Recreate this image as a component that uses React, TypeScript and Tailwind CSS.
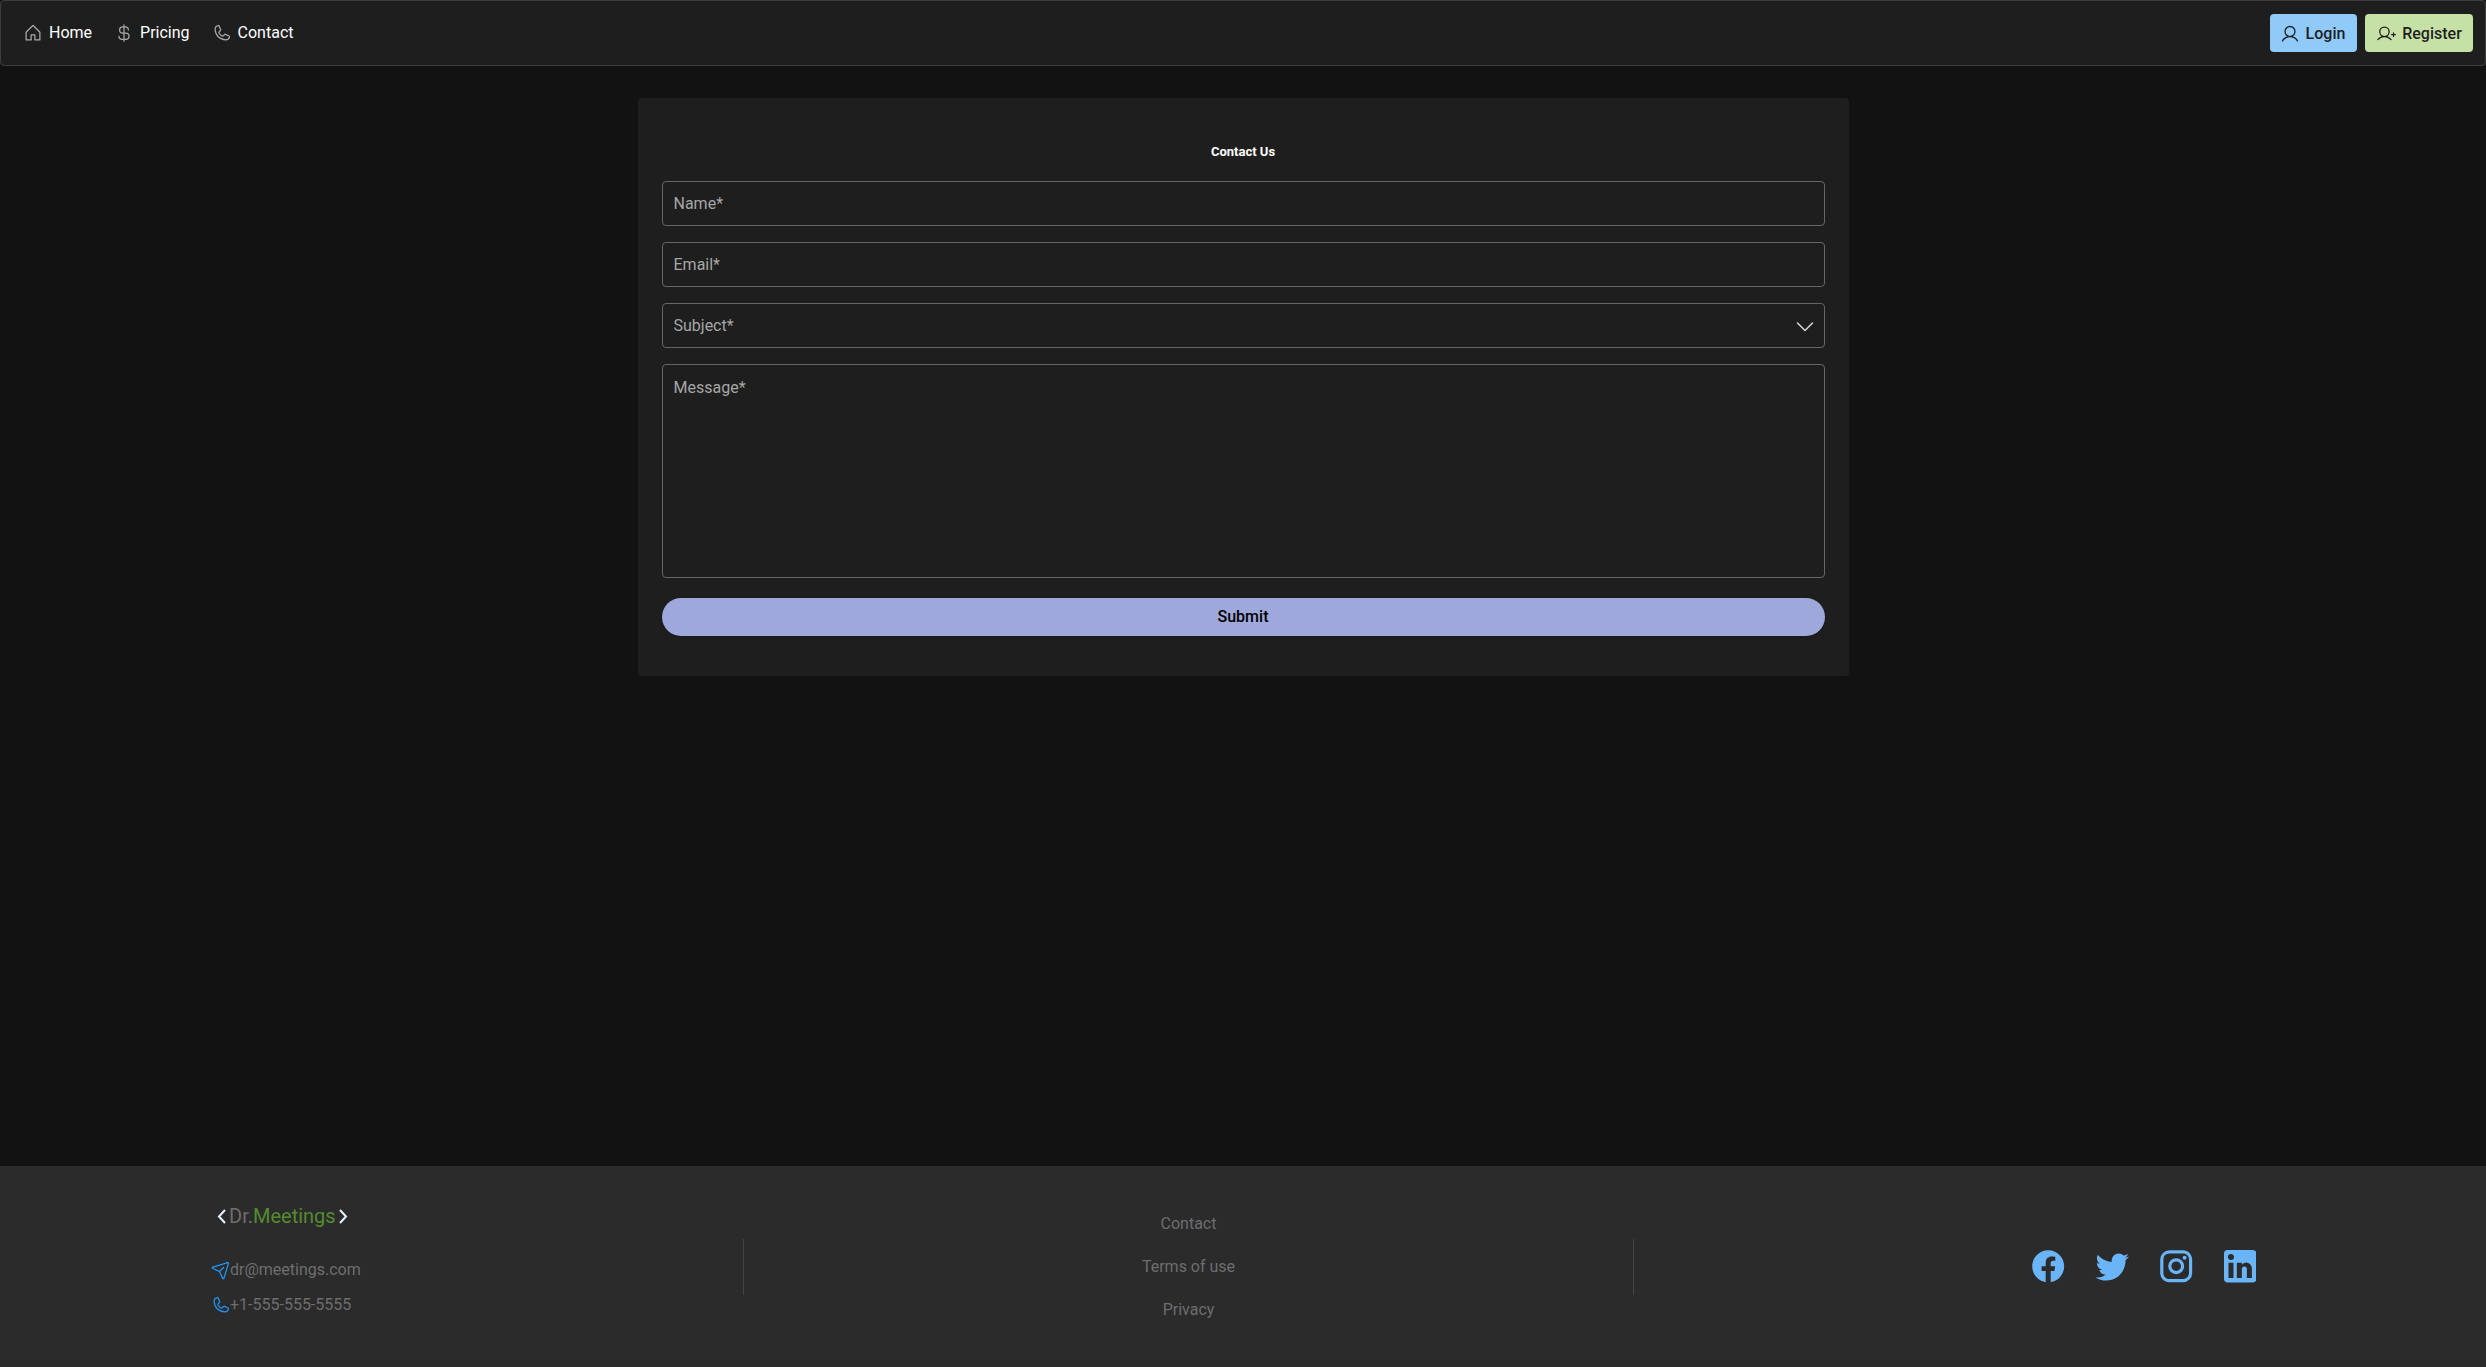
import React from 'react';
import {
  PiCaretDown,
  PiCurrencyDollar,
  PiHouse,
  PiPaperPlaneTilt,
  PiPhone,
  PiUser,
  PiUserPlus,
} from 'react-icons/pi';

const socialIcons = [
  {
    viewBox: '0 0 24 24',
    box: 'size-[38.4px]',
    d: 'M12 2.04c-5.5 0-10 4.49-10 10.02 0 5 3.66 9.15 8.44 9.9v-7H7.9v-2.9h2.54V9.85c0-2.51 1.49-3.89 3.78-3.89 1.09 0 2.23.19 2.23.19v2.47h-1.26c-1.24 0-1.63.77-1.63 1.54v1.88h2.78l-.45 2.9h-2.33v7a10 10 0 0 0 8.44-9.9c0-5.53-4.5-10.02-10-10.02z',
  },
  {
    viewBox: '0 0 24 24',
    box: 'size-[38.4px]',
    d: 'M22.46 6c-.77.35-1.6.58-2.46.69.88-.53 1.56-1.37 1.88-2.38-.83.5-1.75.85-2.72 1.05C18.37 4.5 17.26 4 16 4c-2.35 0-4.27 1.92-4.27 4.29 0 .34.04.67.11.98C8.28 9.09 5.11 7.38 3 4.79c-.37.63-.58 1.37-.58 2.15 0 1.49.75 2.81 1.91 3.56-.71 0-1.37-.2-1.91-.5v.03c0 2.08 1.48 3.82 3.44 4.21a4.22 4.22 0 0 1-1.93.07 4.28 4.28 0 0 0 4 2.98 8.521 8.521 0 0 1-5.33 1.84c-.34 0-.68-.02-1.02-.06C3.44 20.29 5.7 21 8.12 21 16 21 20.33 14.46 20.33 8.79c0-.19 0-.37-.01-.56.84-.6 1.56-1.36 2.14-2.23z',
  },
  {
    viewBox: '0 0 24 24',
    box: 'size-[38.4px]',
    d: 'M7.8 2h8.4C19.4 2 22 4.6 22 7.8v8.4a5.8 5.8 0 0 1-5.8 5.8H7.8C4.6 22 2 19.4 2 16.2V7.8A5.8 5.8 0 0 1 7.8 2m-.2 2A3.6 3.6 0 0 0 4 7.6v8.8C4 18.39 5.61 20 7.6 20h8.8a3.6 3.6 0 0 0 3.6-3.6V7.6C20 5.61 18.39 4 16.4 4H7.6m9.65 1.5a1.25 1.25 0 0 1 1.25 1.25A1.25 1.25 0 0 1 17.25 8 1.25 1.25 0 0 1 16 6.75a1.25 1.25 0 0 1 1.25-1.25M12 7a5 5 0 0 1 5 5 5 5 0 0 1-5 5 5 5 0 0 1-5-5 5 5 0 0 1 5-5m0 2a3 3 0 0 0-3 3 3 3 0 0 0 3 3 3 3 0 0 0 3-3 3 3 0 0 0-3-3z',
  },
  {
    viewBox: '3 3 18 18',
    box: 'size-[38.4px] p-[3px]',
    d: 'M19 3a2 2 0 0 1 2 2v14a2 2 0 0 1-2 2H5a2 2 0 0 1-2-2V5a2 2 0 0 1 2-2h14m-.5 15.5v-5.3a3.26 3.26 0 0 0-3.26-3.26c-.85 0-1.84.52-2.32 1.3v-1.11h-2.79v8.37h2.79v-4.93c0-.77.62-1.4 1.39-1.4a1.4 1.4 0 0 1 1.4 1.4v4.93h2.79M6.88 8.56a1.68 1.68 0 0 0 1.68-1.68c0-.93-.75-1.69-1.68-1.69a1.69 1.69 0 0 0-1.69 1.69c0 .93.76 1.68 1.69 1.68m1.39 9.94v-8.37H5.5v8.37h2.77z',
  },
];

const navLinks = [
  { label: 'Home', icon: PiHouse },
  { label: 'Pricing', icon: PiCurrencyDollar },
  { label: 'Contact', icon: PiPhone },
];

const fieldClass =
  'block w-full rounded-[4px] border border-[#666666] bg-transparent px-[11px] text-[16px] text-white outline-none placeholder:text-[#a6a6a6]';

const LogoBracket = ({ points }: { points: string }) => (
  <svg viewBox="0 0 9 15" className="h-[15px] w-[9px] fill-none stroke-[#e3f2fd] stroke-2">
    <polyline points={points} />
  </svg>
);

export default function App() {
  return (
    <div className="flex h-screen flex-col bg-[#121212] font-['Roboto',sans-serif] text-[16px]">
      <nav className="flex h-[66px] shrink-0 items-center justify-between rounded-[4px] border border-[#3d3d3d] bg-[#1e1e1e] pl-[22px] pr-[12px]">
        <div className="flex items-center gap-[22px]">
          {navLinks.map(({ label, icon: Icon }) => (
            <a key={label} className="flex items-center gap-[6px] text-white">
              <Icon className="size-[20px] text-[#a8a8a8]" />
              {label}
            </a>
          ))}
        </div>
        <div className="flex items-center gap-[8px] font-medium text-[#1e1e1e]">
          <button className="flex h-[38px] w-[87px] items-center justify-center gap-[6px] rounded-[4px] bg-[#90caf9] pr-[2px] pt-[1px]">
            <PiUser className="size-[20px]" />
            Login
          </button>
          <button className="flex h-[38px] w-[108px] items-center justify-center gap-[6px] rounded-[4px] bg-[#c5e1a5] pt-[1px]">
            <PiUserPlus className="size-[20px]" />
            Register
          </button>
        </div>
      </nav>

      <main className="flex-1 pt-[32px]">
        <form className="mx-auto flex h-[578px] w-[1211px] flex-col rounded-[4px] bg-[#1e1e1e] px-[24px] pt-[46px]">
          <h1 className="text-center text-[13px] font-bold leading-[16px] text-white">Contact Us</h1>
          <input className={`${fieldClass} mt-[21px] h-[45px]`} placeholder="Name*" />
          <input className={`${fieldClass} mt-[16px] h-[45px]`} placeholder="Email*" />
          <div className={`${fieldClass} mt-[16px] flex h-[45px] items-center justify-between`}>
            <span className="text-[#a6a6a6]">Subject*</span>
            <PiCaretDown className="mr-[-4px] size-[24px] text-[#d8d8d8]" />
          </div>
          <textarea className={`${fieldClass} mt-[16px] h-[214px] resize-none py-[11px]`} placeholder="Message*" />
          <button className="mt-[20px] h-[38px] rounded-full bg-[#9fa8da] font-medium text-black shadow-sm">Submit</button>
        </form>
      </main>

      <footer className="grid h-[201px] shrink-0 grid-cols-[531px_891px_1fr] items-center bg-[#2b2b2b] px-[212px]">
        <div className="flex flex-col pb-[12px]">
          <div className="flex items-center gap-[3px] pl-[5px] text-[20px] leading-[24px]">
            <LogoBracket points="8,1 2,7.5 8,14" />
            <span>
              <span className="text-[#6e6e6e]">Dr.</span>
              <span className="text-[#558b2f]">Meetings</span>
            </span>
            <LogoBracket points="1,1 7,7.5 1,14" />
          </div>
          <div className="mt-[30px] flex items-center text-[#6e6e6e]">
            <PiPaperPlaneTilt className="mx-[-1px] size-[20px] text-[#2196f3]" />
            dr@meetings.com
          </div>
          <div className="mt-[11px] flex items-center text-[#6e6e6e]">
            <PiPhone className="mx-[-1px] size-[20px] text-[#2196f3]" />
            +1-555-555-5555
          </div>
        </div>
        <div className="flex h-[56px] flex-col items-center justify-center gap-[19px] border-x border-[#444444] text-[#6e6e6e]">
          <a>Contact</a>
          <a>Terms of use</a>
          <a>Privacy</a>
        </div>
        <div className="flex items-center justify-end gap-[25.6px] pr-[15px]">
          {socialIcons.map(({ viewBox, box, d }) => (
            <svg key={d} viewBox={viewBox} className={`${box} fill-[#6ab4f8]`}>
              <path d={d} />
            </svg>
          ))}
        </div>
      </footer>
    </div>
  );
}
